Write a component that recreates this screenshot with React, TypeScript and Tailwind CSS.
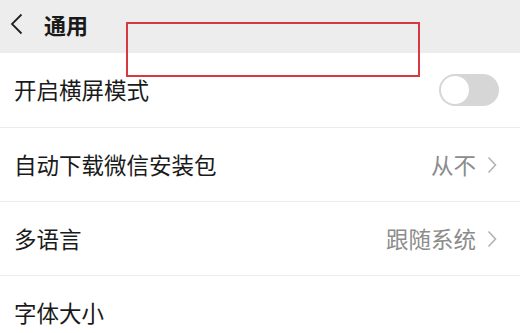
const FONT = { fontFamily: '"Noto Sans CJK SC", "Noto Sans", sans-serif' };

const ROWS = [
  { label: "自动下载微信安装包", value: "从不" },
  { label: "多语言", value: "跟随系统" },
];

function Chevron() {
  return (
    <svg width="10" height="18" viewBox="0 0 10 18" className="text-[#b3b3b3]">
      <path d="M1.5 1.5 L8.5 9 L1.5 16.5" fill="none" stroke="currentColor" strokeWidth="1.6" />
    </svg>
  );
}

export default function App() {
  return (
    <div className="relative w-[520px] h-[333px] overflow-hidden bg-white" style={FONT}>
      {/* Header */}
      <div className="flex items-center h-[53px] bg-[#ededed] pl-[9px] pb-[6px]">
        <svg width="15" height="22" viewBox="0 0 15 22" className="text-[#222]">
          <path d="M12.5 1.5 L3 11 L12.5 20.5" fill="none" stroke="currentColor" strokeWidth="1.8" />
        </svg>
        <span className="ml-[20px] text-[22px] font-bold text-[#1a1a1a] leading-none">通用</span>
      </div>

      {/* List */}
      <div className="flex flex-col">
        <div className="flex items-center justify-between h-[75px] pl-[14px] pr-[21px] border-b border-[#ececec]">
          <span className="text-[22.5px] text-[#1a1a1a]">开启横屏模式</span>
          <div className="flex items-center w-[60px] h-[32px] rounded-full bg-[#d6d6d6] p-[2px]">
            <div className="w-[28px] h-[28px] rounded-full bg-white" />
          </div>
        </div>
        {ROWS.map((row) => (
          <div
            key={row.label}
            className="flex items-center justify-between h-[74px] pl-[14px] pr-[23px] border-b border-[#ececec]"
          >
            <span className="text-[22.5px] text-[#1a1a1a]">{row.label}</span>
            <div className="flex items-center gap-[11px]">
              <span className="text-[22.5px] text-[#8c8c8c]">{row.value}</span>
              <Chevron />
            </div>
          </div>
        ))}
        <div className="flex items-center h-[74px] pl-[14px]">
          <span className="text-[22.5px] text-[#1a1a1a]">字体大小</span>
        </div>
      </div>

      {/* Annotation box */}
      <div className="absolute left-[126px] top-[22px] w-[294px] h-[55px] border-[2px] border-[#d8383f]" />
    </div>
  );
}
